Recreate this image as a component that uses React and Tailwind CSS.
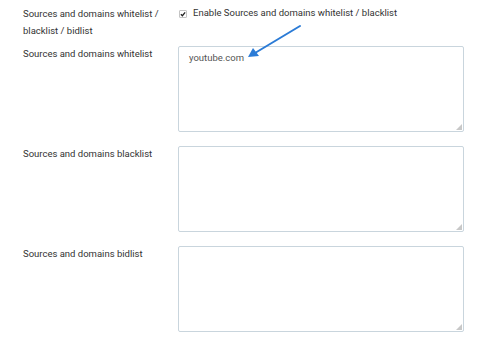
const rows = [
    { label: 'Sources and domains whitelist', value: 'youtube.com' },
    { label: 'Sources and domains blacklist', value: '' },
    { label: 'Sources and domains bidlist', value: '' },
];

const App = () => {
    return (
        <div
            className="relative w-[500px] h-[358px] bg-white text-[#333] text-[9.5px] pl-[23px] pt-[5px]"
            style={{ fontFamily: 'Roboto, "Liberation Sans", sans-serif' }}
        >
            <div className="grid grid-cols-[155px_286px]">
                <div className="leading-[17px]">
                    Sources and domains whitelist /<br />blacklist / bidlist
                </div>
                <div className="flex items-center h-[17px]">
                    <span className="w-[8px] h-[8px] ml-[1px] border border-[#c4c4c4] rounded-[1px] bg-white flex items-center justify-center shrink-0">
                        <svg width="7" height="6" viewBox="0 0 7 6">
                            <path d="M1 3.2 L2.8 5 L6 1" stroke="#222" strokeWidth="1.5" fill="none" />
                        </svg>
                    </span>
                    <span className="ml-[6px]">Enable Sources and domains whitelist / blacklist</span>
                </div>
            </div>

            <div className="mt-[7px] flex flex-col gap-[14px]">
                {rows.map((r) => (
                    <div key={r.label} className="grid grid-cols-[155px_286px]">
                        <div className="leading-[17px] -mt-[1px]">{r.label}</div>
                        <div className="relative w-[286px] h-[86px]">
                            <textarea
                                defaultValue={r.value}
                                className="block w-full h-full resize-none border border-[#c9d5dd] rounded-[2px] px-[10px] py-[2px] text-[9.5px] leading-[17px] text-[#555] outline-none"
                                style={{ fontFamily: 'Roboto, "Liberation Sans", sans-serif' }}
                            />
                            <svg className="absolute right-[2px] bottom-[2px]" width="6" height="6" viewBox="0 0 6 6">
                                <path d="M6 0 L6 6 L0 6 Z" fill="#c8c8c8" />
                            </svg>
                        </div>
                    </div>
                ))}
            </div>

            <svg className="absolute left-0 top-0 pointer-events-none" width="500" height="358">
                <line x1="300" y1="26" x2="255" y2="53" stroke="#2b7bd6" strokeWidth="2" strokeLinecap="round" />
                <path d="M248 57 L253 48 L259 56 Z" fill="#2b7bd6" />
            </svg>
        </div>
    );
};

export default App;
